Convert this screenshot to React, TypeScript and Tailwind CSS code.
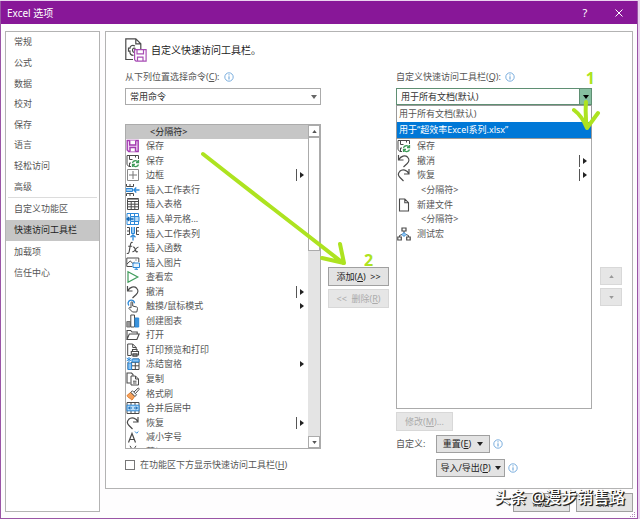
import React, { useState } from "react";

type Marker = "split" | "menu";

interface Command {
  label: string;
  icon?: React.ReactNode;
  marker?: Marker;
}

const INK = "#4a4a4a";
const BLUE = "#2b88d8";
const GREEN = "#3f9c5a";
const PURPLE = "#a23bb0";

function Glyph({ children }: { children: React.ReactNode }) {
  return (
    <svg viewBox="0 0 14 14" className="h-3.5 w-3.5 shrink-0" fill="none" stroke={INK} strokeWidth="1" aria-hidden="true">
      {children}
    </svg>
  );
}

const icons = {
  save: (
    <Glyph>
      <g stroke={PURPLE} strokeWidth="1.4">
        <path d="M1.2 1.5h11v11h-9.5l-1.500-1.500z" fill="#f0d8f4" />
        <path d="M3.700 1.500v4.500h6v-4.500M4 12.500v-4h5.500v4" fill="#fff" />
      </g>
    </Glyph>
  ),
  saveSync: (
    <Glyph>
      <path d="M5 12.500H3L1 10.700V1.500h11.500V5M3.500 1.500v4H6.500M9.500 1.500v2M3.500 12.500V9H5" />
      <g stroke={GREEN} strokeWidth="1.300">
        <path d="M6.500 9c.5-2.800 4.500-3 5.500-.7M12.500 6v2.500H10M12.500 10.500c-.5 2.500-4.500 2.800-5.500.5M6.500 13v-2.500H9" />
      </g>
    </Glyph>
  ),
  border: (
    <Glyph>
      <path d="M1.500 1.500h11v11h-11z" stroke="#8a8a8a" />
      <path d="M7 3v8M3 7h8" stroke="#777" />
    </Glyph>
  ),
  insertRow: (
    <Glyph>
      <path d="M.5 1v2.500h7V1M4 1v2.500M.5 13v-2.500h7V13M4 10.500V13" />
      <path d="M0 5.500h6.500v3H0z" fill="#9ccbf2" stroke={BLUE} />
      <path d="M13.500 7H8M10.300 4.500L7.800 7l2.500 2.500" stroke={BLUE} strokeWidth="1.300" />
    </Glyph>
  ),
  table: (
    <Glyph>
      <path d="M1.500 1.500h11v11h-11zM1.500 4.500h11M1.500 7.200h11M1.500 9.800h11M5.200 4.500v8M8.800 4.500v8" />
      <path d="M1.500 2.500h11" stroke="#999" />
    </Glyph>
  ),
  insertCells: (
    <Glyph>
      <path d="M1 1.500h11.500v11H1zM4.500 1.500v3M8.500 1.500v3M4.500 10v2.500M8.500 10v2.500" stroke={BLUE} />
      <path d="M4.500 4.500h8.500v5H4.500z" fill="#b8dbf6" stroke={BLUE} />
      <path d="M8.700 4.500v5" stroke={BLUE} />
      <path d="M7.500 7H1M3.300 5L1 7l2.300 2" stroke="#1267b4" strokeWidth="1.300" />
    </Glyph>
  ),
  insertCol: (
    <Glyph>
      <path d="M1 .5h2.500v7H1M1 4h2.500M13 .5h-2.500v7H13M10.500 4H13" />
      <path d="M5.500 0v6.500h3V0" fill="#9ccbf2" stroke={BLUE} />
      <path d="M7 13.500V8M4.500 10.300L7 7.800l2.500 2.500" stroke={BLUE} strokeWidth="1.300" />
    </Glyph>
  ),
  fx: (
    <Glyph>
      <path d="M6.700 1.600C5 .8 4.600 2.500 4.300 4.300L3.200 10.500c-.3 1.800-1.200 2.300-2.400 1.700M2.200 5.200h4" strokeWidth="1.100" />
      <path d="M7 6.300c1.300-.8 1.700.5 2.200 2.200s1.200 3 2.700 2M12.500 6.300c-1.200-.6-2 .6-3 2.200s-1.800 2.700-3 2" strokeWidth="1.100" />
    </Glyph>
  ),
  picture: (
    <Glyph>
      <path d="M6.500 10.500H.8v-8.500h12v4M1 8l3.200-3L7 7.500l1.500-1.300M9.500 4h1" />
      <path d="M7 7h6.500v4.500H7zM10.200 11.500v1.700M8.500 13.300h3.500" fill="#e5f2fc" stroke={BLUE} />
    </Glyph>
  ),
  play: (
    <Glyph>
      <path d="M2 1.700l9.800 5.300L2 12.300z" stroke={GREEN} strokeWidth="1.200" />
    </Glyph>
  ),
  undo: (
    <Glyph>
      <path d="M1.500 1v5h5M1.700 5.800C4 2 8 .8 10.700 3.300c2 2 1.300 4.400-.5 6.200L6.500 13" strokeWidth="1.200" />
    </Glyph>
  ),
  redo: (
    <Glyph>
      <path d="M12 1v5H7M11.800 5.800C10.500 2 5.500.8 2.800 3.300c-2 2-1.600 4.400.2 6.200L6.500 13" strokeWidth="1.200" />
    </Glyph>
  ),
  touch: (
    <Glyph>
      <path d="M3 6.500a3.200 3.200 0 1 1 5.500-2.300" stroke={BLUE} strokeWidth="1.300" />
      <path d="M5 9V3.700c0-1.200 1.700-1.200 1.700 0V7l4 1c.7.300 1 .8.800 1.500L10.800 13H6.500L3 9.500c-.3-1 .8-1.500 2-.5z" fill="#fff" />
    </Glyph>
  ),
  chart: (
    <Glyph>
      <path d="M.8 7.500h3.500v5.500H.8z" fill="#9a9a9a" stroke="#777" />
      <path d="M4.800 1h3.700v12H4.800z" stroke={INK} fill="#fff" />
      <path d="M9 4h3.700v9H9z" fill="#3c94dc" stroke={BLUE} />
    </Glyph>
  ),
  open: (
    <Glyph>
      <path d="M1 11.500V2.500h3.700l1.300 1.500h5.200v2M1 11.500L3.300 6h9.900l-2.300 5.500z" strokeWidth="1.100" />
    </Glyph>
  ),
  print: (
    <Glyph>
      <path d="M5 12.500H1.700V1h5l3.500 3.500V6M6.700 1v3.500h3.500" />
      <path d="M6.500 8.500v-2h4.500v2M5.300 8.500h7.200v3.500H5.300zM7 10.800h4v2.500H7z" strokeWidth="1.100" fill="#fff" />
    </Glyph>
  ),
  freeze: (
    <Glyph>
      <path d="M2 5v7.500h11V2H7M5.600 5v7.500M9.300 2v10.500M2 8.800h11M6 5.300h7" />
      <path d="M6 2h7v3H6zM2 6h3.500v6.500H2z" fill="#8cc3f0" stroke={BLUE} />
      <path d="M3 0v5M.7 1.200l4.600 2.600M5.300 1.200L.7 3.800" stroke={BLUE} />
    </Glyph>
  ),
  copy: (
    <Glyph>
      <path d="M4.500 11H1V1h4.500l1.500 1.500v1.300" strokeWidth="1.100" />
      <path d="M5 4h4.500l3 3v6H5zM9.500 4v3h3M7 9.200h3.500M7 11h3.500" />
    </Glyph>
  ),
  brush: (
    <Glyph>
      <path d="M1 8.500l3.500-3 4 4L6 13c-1-.2-1.500-1-1.500-1.700C3.200 11.500 1.500 10 1 8.500z" fill="#f5a15c" stroke="#e07b28" />
      <path d="M4.800 5.300l1.700-1.500 4 4L9 9.500zM8 5l4-3.800c1-.2 1.500.5 1 1.300L9.500 6.500" fill="#fff" />
    </Glyph>
  ),
  merge: (
    <Glyph>
      <path d="M1 1.500h12v11H1zM5 1.500v2.500M9 1.500v2.500M5 10v2.500M9 10v2.500" />
      <path d="M1 4.200h12v5.600H1z" fill="#b8dbf6" stroke={BLUE} />
      <path d="M2.500 7H6M8 7h3.500M4.300 5.500L2.700 7l1.600 1.500M9.700 5.500L11.300 7 9.700 8.500" stroke="#1267b4" />
    </Glyph>
  ),
  fontDown: (
    <Glyph>
      <path d="M2.500 12.500L6 3.500l3.500 9M3.700 9.500h4.600" strokeWidth="1.200" />
      <path d="M9 1.500l1.700 1.700 1.700-1.700" stroke={BLUE} />
    </Glyph>
  ),
  cut: (
    <Glyph>
      <path d="M4 .8l5.500 9M10 .8l-5.500 9" />
      <circle cx="3.500" cy="11.300" r="1.800" stroke={BLUE} />
      <circle cx="10.500" cy="11.300" r="1.800" stroke={BLUE} />
    </Glyph>
  ),
  file: (
    <Glyph>
      <path d="M2.500 1h5.300l3.700 3.700V13h-9zM7.800 1v3.700h3.700" strokeWidth="1.100" />
    </Glyph>
  ),
  macro: (
    <Glyph>
      <path d="M5 1h4v3H5zM.8 10h3.500v3H.8zM9.700 10h3.500v3H9.700z" strokeWidth="1.200" />
      <path d="M7 4v2M2.500 10V8.500L5 7.500M11.500 10V8.500L9 7.500" />
      <path d="M7 5.500l2 2-2 2-2-2z" fill="#9ccbf2" stroke={BLUE} />
    </Glyph>
  ),
};

const commands: Command[] = [
  { label: "保存", icon: icons.save },
  { label: "保存", icon: icons.saveSync },
  { label: "边框", icon: icons.border, marker: "split" },
  { label: "插入工作表行", icon: icons.insertRow },
  { label: "插入表格", icon: icons.table },
  { label: "插入单元格...", icon: icons.insertCells },
  { label: "插入工作表列", icon: icons.insertCol },
  { label: "插入函数", icon: icons.fx },
  { label: "插入图片", icon: icons.picture },
  { label: "查看宏", icon: icons.play },
  { label: "撤消", icon: icons.undo, marker: "split" },
  { label: "触摸/鼠标模式", icon: icons.touch, marker: "menu" },
  { label: "创建图表", icon: icons.chart },
  { label: "打开", icon: icons.open },
  { label: "打印预览和打印", icon: icons.print },
  { label: "冻结窗格", icon: icons.freeze, marker: "menu" },
  { label: "复制", icon: icons.copy },
  { label: "格式刷", icon: icons.brush },
  { label: "合并后居中", icon: icons.merge },
  { label: "恢复", icon: icons.redo, marker: "split" },
  { label: "减小字号", icon: icons.fontDown },
  { label: "剪切", icon: icons.cut },
];

const toolbarItems: Command[] = [
  { label: "保存", icon: icons.saveSync },
  { label: "撤消", icon: icons.undo, marker: "split" },
  { label: "恢复", icon: icons.redo, marker: "split" },
  { label: "<分隔符>" },
  { label: "新建文件", icon: icons.file },
  { label: "<分隔符>" },
  { label: "测试宏", icon: icons.macro },
];

const mainPages = ["常规", "公式", "数据", "校对", "保存", "语言", "轻松访问", "高级"];

function CommandRow({ item }: { item: Command }) {
  return (
    <li role="option" aria-selected="false" className="flex items-center pr-1">
      {item.icon}
      <span className={item.icon ? "ml-1.5" : "ml-6"}>{item.label}</span>
      {item.marker && (
        <span className="ml-auto flex items-center gap-[3px]">
          {item.marker === "split" && <span className="h-3 w-px bg-[#555]" />}
          <svg viewBox="0 0 4 6" className="h-1.5 w-1" aria-hidden="true">
            <path d="M0 0l4 3-4 3z" fill="#222" />
          </svg>
        </span>
      )}
    </li>
  );
}

function Triangle({ up, className }: { up?: boolean; className: string }) {
  return (
    <svg viewBox="0 0 6 4" className={className} fill="currentColor" aria-hidden="true">
      <path d={up ? "M0 4l3-4 3 4z" : "M0 0h6l-3 4z"} />
    </svg>
  );
}

function Info() {
  return (
    <svg viewBox="0 0 10 10" className="h-2.5 w-2.5 shrink-0" fill="none" stroke="#5b9bd5" aria-hidden="true">
      <circle cx="5" cy="5" r="4.200" strokeWidth=".8" />
      <path d="M5 4.300v3.200M5 2.300v1.100" />
    </svg>
  );
}

const button = "flex items-center justify-center border whitespace-nowrap";
const enabled = "border-[#a0a0a0] bg-[#e3e3e3] text-[#222]";
const disabled = "border-[#d8d8d8] bg-[#e6e6e6] text-[#ababab]";

export default function App() {
  const [page, setPage] = useState("快速访问工具栏");
  const [below, setBelow] = useState(false);

  const navItem = (name: string) => (
    <button
      key={name}
      type="button"
      onClick={() => setPage(name)}
      className={`flex min-h-5 w-full items-center pl-2 text-left ${page === name ? "bg-[#c6c6c6] text-[#222]" : ""}`}
    >
      {name}
    </button>
  );

  return (
    <div className="min-h-screen bg-[#ead3ef] pt-px pr-0.5 font-['Noto_Sans','Noto_Sans_CJK_SC',sans-serif] text-[9px] leading-3 text-[#555]">
      <div className="flex min-h-[calc(100vh-1px)] flex-col border border-t-0 border-[#9a55a6] bg-[#fefdfe]">
        <header className="flex h-[23px] items-center bg-[#881798] pl-1.5 text-white">
          <h1 className="text-[10px]">Excel 选项</h1>
          <button type="button" aria-label="帮助" className="ml-auto w-5 text-[11px]">?</button>
          <button type="button" aria-label="关闭" className="mr-2 ml-3.5 flex w-5 justify-center">
            <svg viewBox="0 0 8 8" className="h-2 w-2" stroke="#fff" aria-hidden="true">
              <path d="M.5.5l7 7M7.500.5l-7 7" />
            </svg>
          </button>
        </header>

        <div className="flex grow gap-[5px] pt-[7px] pr-1 pb-1.5 pl-1">
          <nav className="w-[95px] shrink-0 border border-[#b3b3b3] bg-white">
            <div className="grid h-[165px] auto-rows-fr">{mainPages.map(navItem)}</div>
            <hr className="mx-0.5 border-[#dcdcdc]" />
            <div className="grid h-[86px] auto-rows-fr">
              {["自定义功能区", "快速访问工具栏", "加载项", "信任中心"].map(navItem)}
            </div>
          </nav>

          <div className="flex min-w-0 grow flex-col">
            <main className="grow border border-[#b3b3b3] bg-white pt-1.5 pr-2.5 pb-2.5 pl-[19px]">
              <div className="flex h-6 items-center gap-1">
                <svg viewBox="0 0 22 24" className="h-6 w-[22px]" fill="none" stroke={INK} aria-hidden="true">
                  <path d="M8 21.500H.8V.8h10l5 5v5.500M10.800.8v5h5" strokeWidth="1.200" />
                  <path d="M10 8c-3-1.500-5 .2-5 2.200H3.500v3H5c-.5 2.500 1 4.200 3.500 4.200M10.500 10.500c-1.500-1-3 0-3 1.500s1 2.500 2 2.300" strokeWidth="1.200" />
                  <g stroke="#a84db5" strokeWidth="1.200">
                    <path d="M9.600 11.600h11.500v11.500H11l-1.400-1.400z" fill="#fff" />
                    <path d="M12 11.600v4.200h6.500v-4.200M12.500 23v-3.800h5.500v3.800" />
                  </g>
                </svg>
                <h2 className="text-[10px] text-[#222]">自定义快速访问工具栏。</h2>
              </div>

              <div className="mt-2 flex">
                <section className="min-w-0 flex-1">
                  <div className="flex h-3.5 items-center gap-1">
                    <label htmlFor="source">从下列位置选择命令(<u>C</u>):</label>
                    <Info />
                  </div>
                  <div className="relative mt-1">
                    <select id="source" className="block h-[17px] w-full appearance-none border border-[#ababab] bg-white pl-1 text-[#333]">
                      <option>常用命令</option>
                    </select>
                    <Triangle className="pointer-events-none absolute top-[7px] right-1 h-1 w-1.5 text-[#666]" />
                  </div>

                  <div className="relative mt-[19px] flex h-[325px] border border-[#ababab]">
                    <ul role="listbox" aria-label="常用命令" className="min-w-0 grow overflow-hidden">
                      <li role="option" aria-selected="true" className="flex h-3.5 items-center bg-[#c6c6c6] pl-6 text-[#222]">
                        &lt;分隔符&gt;
                      </li>
                      <li role="presentation">
                        <ul role="group" className="grid h-80 auto-rows-fr">
                          {commands.map((item, i) => (
                            <CommandRow key={i} item={item} />
                          ))}
                        </ul>
                      </li>
                    </ul>
                    <div className="flex w-3 shrink-0 flex-col bg-[#e4e4e4] text-[#555]">
                      <button type="button" aria-label="向上滚动" className="flex h-3 items-center justify-center border border-[#ababab] bg-white">
                        <Triangle up className="h-[3px] w-[5px]" />
                      </button>
                      <div className="h-[114px] border border-[#ababab] bg-white" />
                      <button type="button" aria-label="向下滚动" className="mt-auto flex h-3 items-center justify-center border border-[#ababab] bg-white">
                        <Triangle className="h-[3px] w-[5px]" />
                      </button>
                    </div>
                    {/* hand-drawn pointer to the add button */}
                    <svg viewBox="0 0 150 120" className="pointer-events-none absolute top-[23px] -right-7 z-10 h-[120px] w-[150px]" fill="none" stroke="#ade320" strokeWidth="4" strokeLinecap="round" strokeLinejoin="round" aria-hidden="true">
                      <path d="M5 6Q38 32 73 59T145 115M124 110L146 115L142 96" />
                    </svg>
                  </div>

                  <label className="mt-2.5 flex h-3 items-center gap-[5px] whitespace-nowrap">
                    <input
                      type="checkbox"
                      checked={below}
                      onChange={(e) => setBelow(e.target.checked)}
                      className="h-2.5 w-2.5 appearance-none border border-[#777] bg-white checked:bg-[#881798]"
                    />
                    <span>在功能区下方显示快速访问工具栏(<u>H</u>)</span>
                  </label>
                </section>

                <div className="relative mx-[7px] flex w-[61px] shrink-0 flex-col gap-[3px] pt-[197px]">
                  <span className="absolute top-[180px] left-9 text-base leading-5 font-bold text-[#ade320]">2</span>
                  <button type="button" className={`${button} ${enabled} h-[19px]`}>
                    添加(<u>A</u>)&nbsp; &gt;&gt;
                  </button>
                  <button type="button" disabled className={`${button} ${disabled} h-[19px]`}>
                    &lt;&lt; &nbsp;删除(<u>R</u>)
                  </button>
                </div>

                <section className="min-w-0 flex-1">
                  <div className="flex h-3.5 items-center gap-1">
                    <label htmlFor="target">自定义快速访问工具栏(<u>Q</u>):</label>
                    <Info />
                  </div>
                  <div className="relative mt-1">
                    <select id="target" className="block h-[17px] w-full appearance-none border border-[#5f8f73] bg-white pl-1 text-[#333]">
                      <option>用于所有文档(默认)</option>
                    </select>
                    <span className="pointer-events-none absolute inset-y-0 right-0 flex w-[13px] items-center justify-center border border-[#5f8f73] bg-[#86bfa0] text-black">
                      <Triangle className="h-1 w-1.5" />
                    </span>
                    <ul role="listbox" aria-label="自定义快速访问工具栏" className="absolute inset-x-0 top-full z-10 border border-[#999] bg-white">
                      <li role="option" aria-selected="false" className="flex h-4 items-center pl-0.5">用于所有文档(默认)</li>
                      <li role="option" aria-selected="true" className="flex h-4 items-center bg-[#0078d7] pl-0.5 text-white">用于“超效率Excel系列.xlsx”</li>
                    </ul>
                    <span className="absolute -top-5 right-[-3px] z-20 text-base leading-5 font-bold text-[#ade320]">1</span>
                    <svg viewBox="0 0 30 34" className="pointer-events-none absolute top-2.5 -right-2.5 z-20 h-[34px] w-[30px]" fill="none" stroke="#ade320" strokeWidth="4" strokeLinecap="round" strokeLinejoin="round" aria-hidden="true">
                      <path d="M14 4Q13 18 15 30M2 12Q10 18 15 30L26 15" />
                    </svg>
                  </div>

                  <ul role="listbox" aria-label="工具栏命令" className="h-[304px] border border-[#ababab] pt-[33px]">
                    <li role="presentation">
                      <ul role="group" className="grid h-[102px] auto-rows-fr">
                        {toolbarItems.map((item, i) => (
                          <CommandRow key={i} item={item} />
                        ))}
                      </ul>
                    </li>
                  </ul>

                  <button type="button" disabled className={`${button} ${disabled} mt-[3px] h-[19px] w-[57px]`}>
                    修改(<u>M</u>)...
                  </button>
                  <div className="mt-1 grid grid-cols-[auto_1fr] items-center gap-x-2 gap-y-1.5">
                    <span className="w-8">自定义:</span>
                    <div className="flex items-center gap-[3px]">
                      <button type="button" className={`${button} ${enabled} h-[18px] w-[54px] gap-1.5`}>
                        <span>重置(<u>E</u>)</span>
                        <Triangle className="h-1 w-1.5" />
                      </button>
                      <Info />
                    </div>
                    <div className="col-start-2 flex items-center gap-[3px]">
                      <button type="button" className={`${button} ${enabled} h-[18px] w-[69px] gap-1`}>
                        <span>导入/导出(<u>P</u>)</span>
                        <Triangle className="h-1 w-1.5" />
                      </button>
                      <Info />
                    </div>
                  </div>
                </section>

                <div className="ml-2 flex w-[22px] shrink-0 flex-col gap-[3px] pt-[197px]">
                  <button type="button" disabled aria-label="上移" className={`${button} ${disabled} h-[18px]`}>
                    <Triangle up className="h-[3px] w-[5px] text-[#999]" />
                  </button>
                  <button type="button" disabled aria-label="下移" className={`${button} ${disabled} h-[18px]`}>
                    <Triangle className="h-[3px] w-[5px] text-[#999]" />
                  </button>
                </div>
              </div>
            </main>

            <footer className="relative mt-1 flex justify-end gap-1.5">
              <button type="button" className={`${button} ${enabled} h-[19px] w-[57px]`}>确定</button>
              <button type="button" className={`${button} ${enabled} h-[19px] w-[57px]`}>取消</button>
              <span className="absolute -top-1.5 right-2 text-base leading-5 font-medium whitespace-nowrap text-white [text-shadow:1px_1px_0_#222,1px_1px_1px_#000]">
                头条 @漫步销售路
              </span>
              <svg viewBox="0 0 6 6" className="absolute right-[-3px] -bottom-1.5 h-1.5 w-1.5" fill="#b48abb" aria-hidden="true">
                <path d="M4 0h1v1H4zM4 2h1v1H4zM2 2h1v1H2zM4 4h1v1H4zM2 4h1v1H2zM0 4h1v1H0z" />
              </svg>
            </footer>
          </div>
        </div>
      </div>
    </div>
  );
}
